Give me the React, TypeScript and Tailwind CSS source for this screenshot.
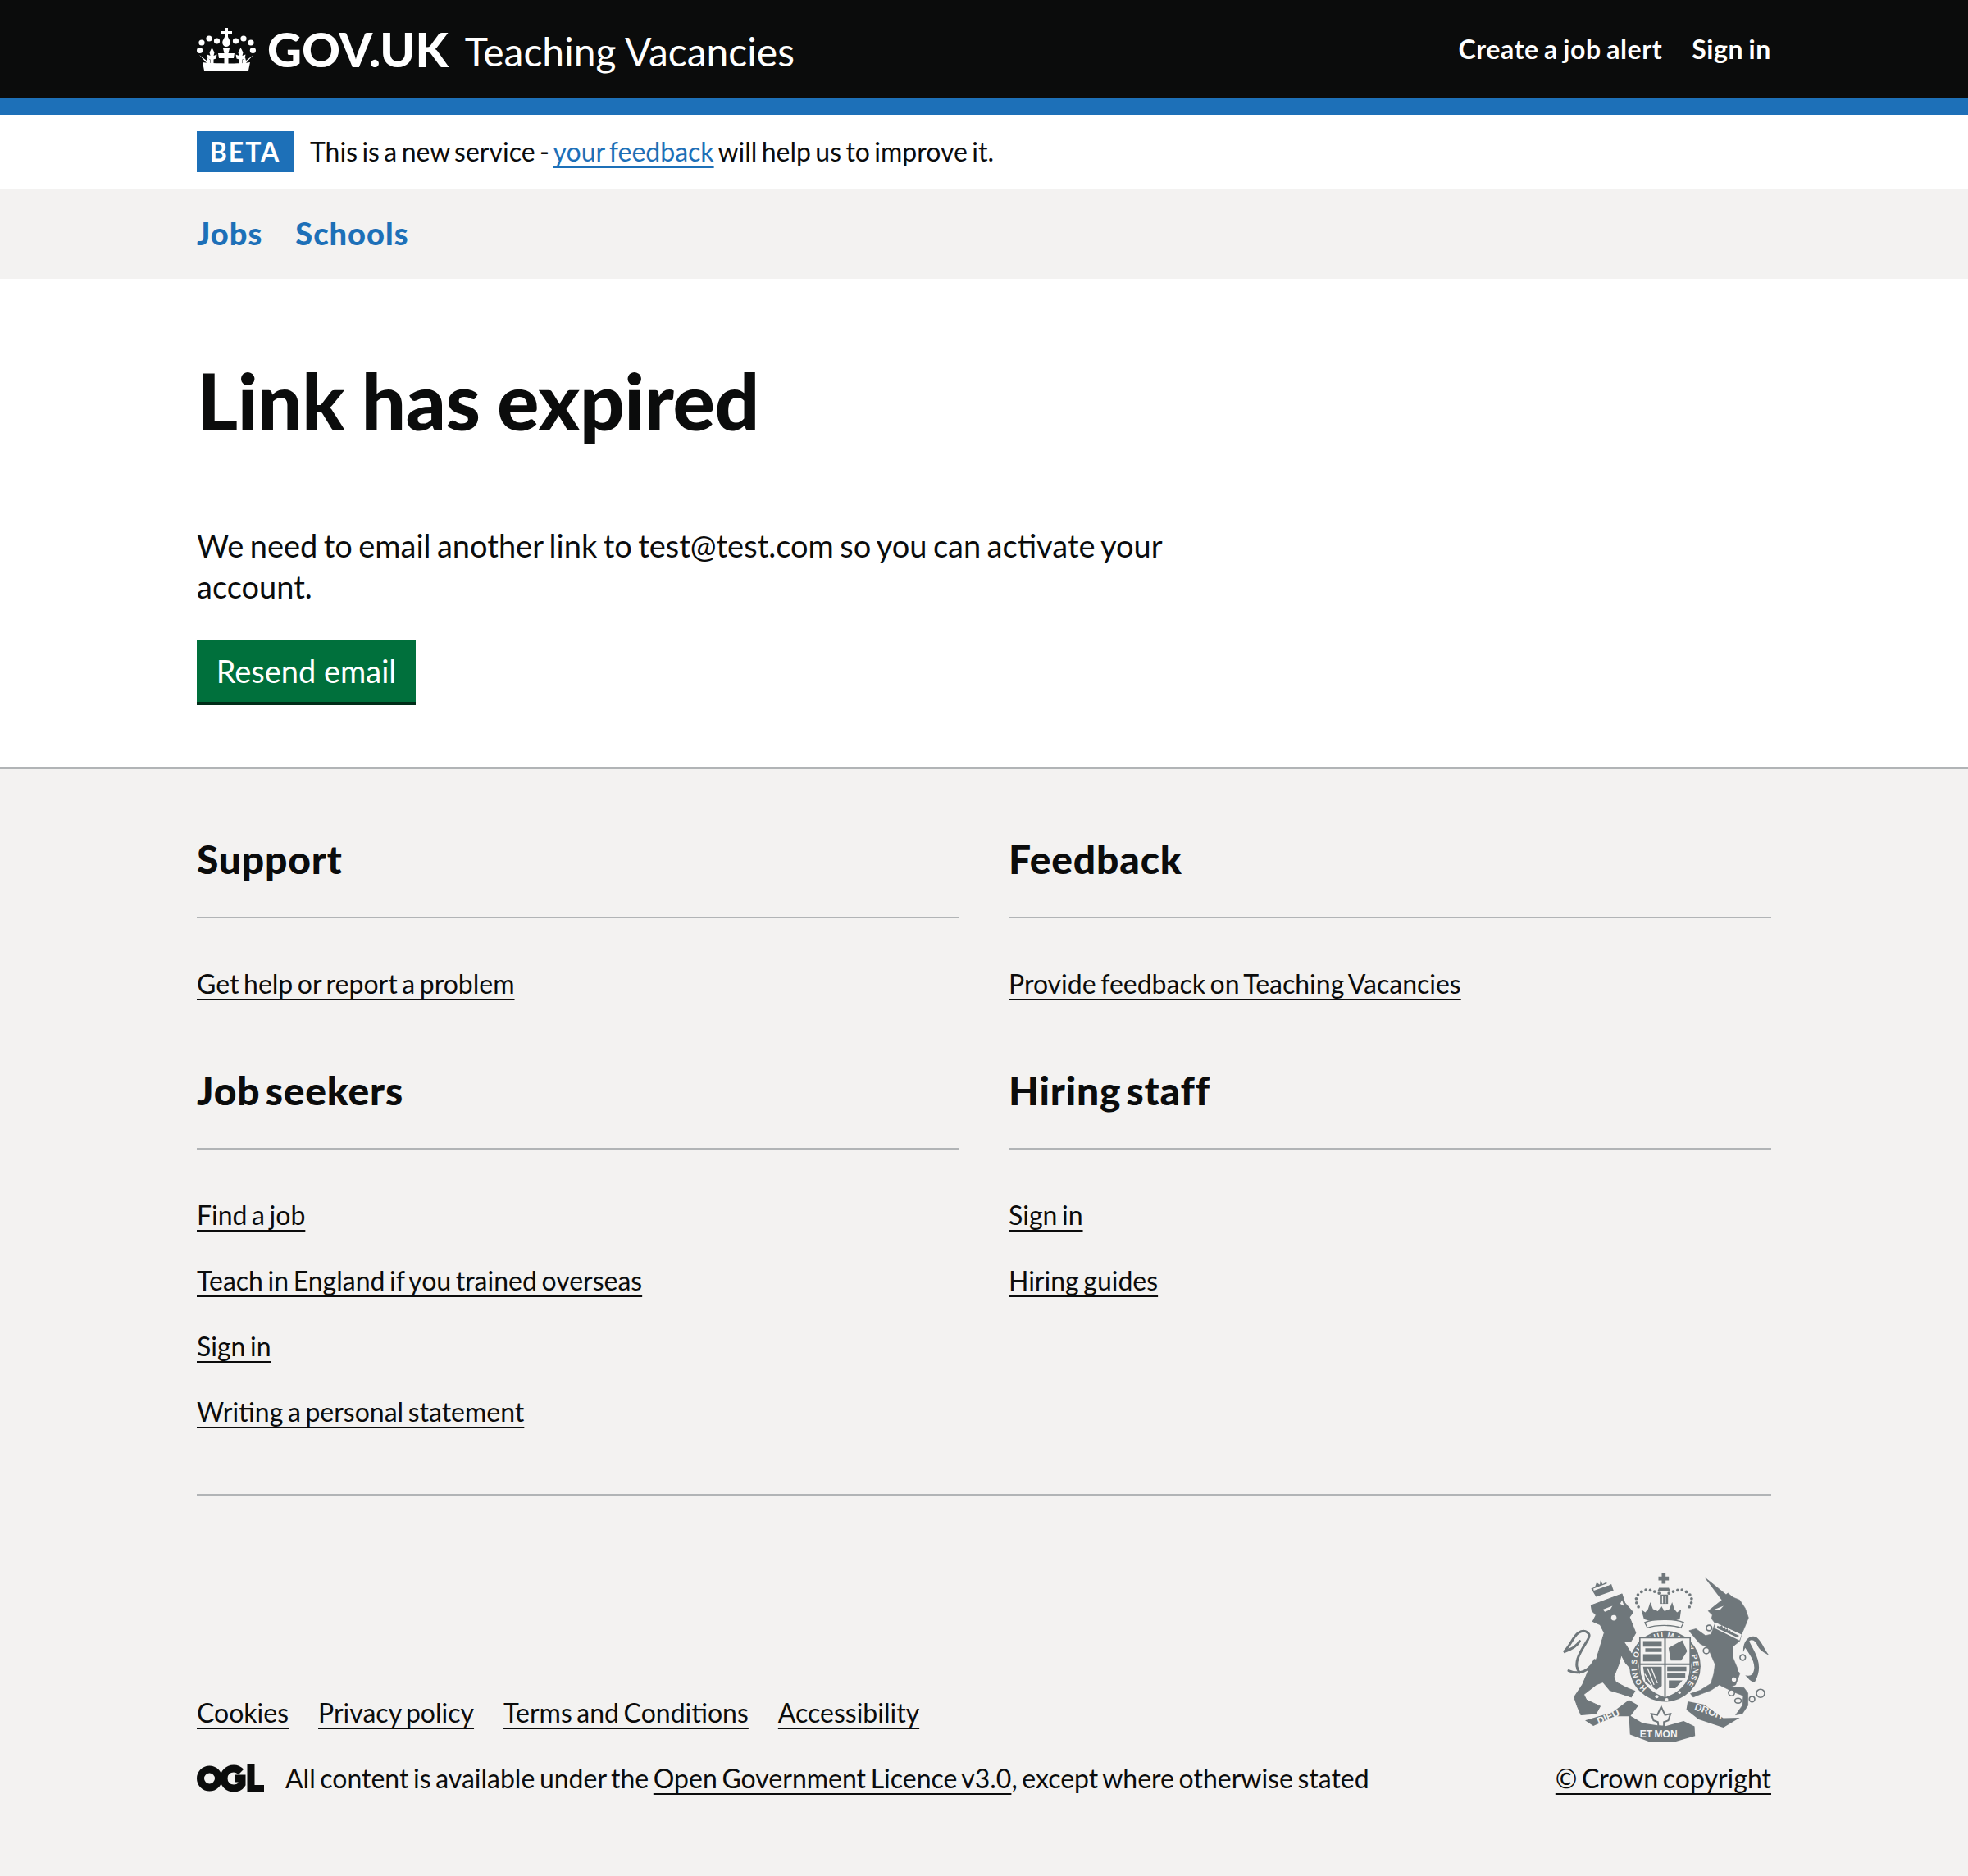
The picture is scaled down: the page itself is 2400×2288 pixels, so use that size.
import React from "react";

const CrownLogo = () => (
  <svg viewBox="0 0 72 52" className="h-[52px] w-[72px] shrink-0" fill="#fff">
    <path d="M34 0h4v4h5v4h-5v3l2.500 5c1 4-1.500 7-4.500 7s-5.500-3-4.500-7L34 11V8h-5V4h5z" />
    <circle cx="6" cy="18" r="3.600" />
    <circle cx="15" cy="13" r="3.600" />
    <circle cx="24.500" cy="16" r="3.600" />
    <circle cx="47.500" cy="16" r="3.600" />
    <circle cx="57" cy="13" r="3.600" />
    <circle cx="66" cy="18" r="3.600" />
    <circle cx="3.600" cy="27.500" r="3.600" />
    <circle cx="68.400" cy="27.500" r="3.600" />
    <path d="M3 33l9 7 1-4 3 3v5h-3zM69 33l-9 7-1-4-3 3v5h3z" />
    <path d="M18.500 24l3 6-1 4 4-1.500-1 5-3 1V44h-4v-5.500l-3-1-1-5 4 1.500-1-4z" />
    <path d="M53.500 24l3 6-1 4 4-1.500-1 5-3 1V44h-4v-5.500l-3-1-1-5 4 1.500-1-4z" />
    <path d="M32 25h8l-1.500 6H46l-1 6h-6.500v7h-5v-7H27l-1-6h7.500z" />
    <path d="M7 42c8 2 50 2 58 0l-2 10H9z" />
  </svg>
);

const OglLogo = () => (
  <svg viewBox="0 0 82 34" className="h-[34px] w-[82px] shrink-0" fill="none" stroke="#0b0c0c">
    <circle cx="15.500" cy="17" r="11" strokeWidth="9" />
    <path d="M54 9c-2-2-5-4-9-4-7 0-12 5-12 12s5 12 12 12c5 0 8-2 10-5v-7h-9" strokeWidth="9" />
    <path d="M66 0v29.500h16" strokeWidth="9" />
  </svg>
);

const COAT = "#6f777b";
const PAPER = "#f3f2f1";

const CoatOfArms = () => (
  <svg viewBox="60 70 770 620" className="h-[207px] w-[257px]" fill={COAT} fontFamily="'Liberation Sans', sans-serif" fontWeight="700">
    {/* lion */}
    <path
      strokeLinejoin="round"
      stroke={COAT}
      strokeWidth="3"
      d="M172 190L285 148L295 180L325 215L312 232L335 290L318 320L290 320L338 395L345 420L320 425L298 400L282 370L275 400L255 450L262 470L300 490L332 503L318 525L280 512L240 500L215 470L190 480L145 515L155 535L205 558L190 585L135 590L122 560L110 525L140 480L165 420L190 390L205 340L220 290L205 260L178 248L190 225L175 210Z"
    />
    <g fill="none" stroke={COAT} strokeWidth="9" strokeLinecap="round">
      <path d="M185 390C165 430 130 445 90 428" />
      <path d="M130 435C100 400 140 350 160 315C175 290 150 275 125 290C105 305 95 340 72 360C100 350 120 340 130 320" />
    </g>
    <path d="M172 128l14-6 6-16 12 8 2-16 8 14 14-8 4 14 14-6 8 24-64 22z" />
    <path d="M180 128l60-22 2 8-60 22z" fill={PAPER} />
    <circle cx="255" cy="235" r="10" fill={PAPER} />
    <path d="M215 205l35-14-8 14-20 8zM285 170l8 22-15-8z" fill={PAPER} />
    {/* unicorn */}
    <path
      strokeLinejoin="round"
      stroke={COAT}
      strokeWidth="2"
      d="M588 88L665 150L672 145L690 160L715 170L735 200L747 235L735 265L722 295L715 320L690 340L690 380L715 440L700 480L680 488L730 490L745 510L745 555L725 585L700 590L725 555L728 520L690 505L640 480L610 500L570 515L545 525L535 512L570 500L610 475L620 440L625 405L610 370L600 345L570 330L540 295L530 282L555 275L590 300L610 295L625 255L612 238L615 225L600 210L625 190L650 170Z"
    />
    <path d="M728 360C725 315 755 295 775 305C795 320 805 350 822 372C805 362 790 355 782 340C775 320 760 310 750 320C760 350 810 400 770 470C755 470 745 455 735 445C755 450 765 445 768 420C770 390 745 360 735 345Z" />
    <path d="M626 252l96 44-8 22-92-46z" fill={PAPER} />
    <path d="M634 264l78 36-3 8-78-36zM640 258l4 8 6-4 4 10 6-4 4 10 6-4 4 10 6-4 4 10 6-4 4 12-50-24z" />
    <path d="M622 205l34-14-14 16z" fill={PAPER} />
    <g fill={PAPER} stroke={COAT} strokeWidth="5">
      <circle cx="603" cy="272" r="10" />
      <circle cx="593" cy="355" r="11" />
      <circle cx="726" cy="380" r="10" />
      <circle cx="685" cy="509" r="11" />
      <ellipse cx="709" cy="538" rx="12" ry="9" />
      <circle cx="760" cy="532" r="10" />
      <circle cx="791" cy="511" r="15" />
    </g>
    <circle cx="716" cy="425" r="8" fill={PAPER} />
    <circle cx="694" cy="461" r="8" fill={PAPER} />
    {/* crown */}
    <path d="M430 72h14v12h12v14h-12v12h-14V98h-12V84h12z" />
    <path d="M420 125h36l6 14h-48z" />
    <g>
      <circle cx="338" cy="180" r="5.500" /><circle cx="337" cy="165" r="5.500" /><circle cx="343" cy="151" r="5.500" />
      <circle cx="356" cy="140" r="5.500" /><circle cx="372" cy="133" r="5.500" /><circle cx="388" cy="134" r="5.500" />
      <circle cx="404" cy="139" r="5.500" /><circle cx="420" cy="145" r="5.500" /><circle cx="456" cy="145" r="5.500" />
      <circle cx="472" cy="139" r="5.500" /><circle cx="488" cy="134" r="5.500" /><circle cx="504" cy="133" r="5.500" />
      <circle cx="520" cy="140" r="5.500" /><circle cx="533" cy="151" r="5.500" /><circle cx="539" cy="165" r="5.500" />
      <circle cx="538" cy="180" r="5.500" /><circle cx="345" cy="195" r="5.500" /><circle cx="531" cy="195" r="5.500" />
    </g>
    <path d="M423 150h30v34h-30z" />
    <path d="M431 154h4v28h-4zM441 154h4v28h-4z" fill={PAPER} />
    <path d="M355 205l15 10 10-12 8-25 10 25 18 8 12-20 12 20 18-8 10-25 8 25 10 12 15-10-5 34c-20 12-110 12-131 0z" />
    <path d="M368 252c30-14 110-14 142 0l-10 20c-30-12-92-12-122 0z" fill={PAPER} stroke={COAT} strokeWidth="4" />
    {/* garter */}
    <circle cx="442" cy="412" r="130" />
    <circle cx="442" cy="412" r="96" fill={PAPER} />
    <path id="garterRing" d="M376 492A104 104 0 1 1 508 492" fill="none" />
    <text fontSize="28" fill={PAPER}>
      <textPath href="#garterRing" textLength="490" lengthAdjust="spacing">
        HONI SOIT QUI MAL Y PENSE
      </textPath>
    </text>
    {/* shield */}
    <path d="M350 308h184v116c0 56-48 90-92 104-44-14-92-48-92-104z" fill={PAPER} stroke={COAT} strokeWidth="5" />
    <path d="M439 304h6v226h-6zM350 402h184v6H350z" />
    <path d="M362 320h68v20h-68zM370 346h60v14h-60zM362 368h68v26h-68zM455 345l50-28 18 40-22 34-38 0z" />
    <path d="M362 414h68v70l-20 14-40-30z" />
    <path d="M378 420l24 60M392 418l22 56M368 440l28 46" stroke={PAPER} strokeWidth="4" fill="none" />
    <path d="M450 414h70v16h-70zM450 438h66v18h-66zM456 464h50l-26 28h-24z" />
    <circle cx="412" cy="523" r="6" fill={PAPER} />
    <circle cx="448" cy="534" r="6" fill={PAPER} />
    <circle cx="495" cy="508" r="5" fill={PAPER} />
    {/* motto */}
    <path d="M150 610l100-30 60-45 35 20-30 40-55 0-80 35z" />
    <path d="M525 540l60 12 70 50 60-2-60 36-90-30-45-35z" />
    <path d="M310 590l50 30 80 12 70-20 40 20 2 35-70 20-100 0-68-25z" />
    <path d="M414 590l14-30 14 30 20-4-8 24-16 6 0 16-20 0-2-16-16-6-8-24z" fill="none" stroke={COAT} strokeWidth="6" />
    <text x="200" y="625" fontSize="36" fill={PAPER} transform="rotate(-24 200 625)">DIEU</text>
    <text x="350" y="672" fontSize="36" fill={PAPER}>ET MON</text>
    <text x="548" y="570" fontSize="36" fill={PAPER} transform="rotate(20 548 570)">DROIT</text>
  </svg>
);

const FooterLink = ({ children }: { children: React.ReactNode }) => (
  <a href="#" className="text-[32px] leading-[40px] text-[#0b0c0c] underline decoration-2 underline-offset-[6px]">
    {children}
  </a>
);

const FooterColumn = ({ title, links }: { title: string; links: string[] }) => (
  <div>
    <h2 className="text-[48px] font-black leading-[50px] tracking-[0.8px] text-[#0b0c0c] [word-spacing:-6px]">{title}</h2>
    <hr className="mt-[45px] border-t-2 border-[#b1b4b6]" />
    <ul className="mt-[60px] flex flex-col gap-[40px] [word-spacing:-2.6px]">
      {links.map((link) => (
        <li key={link} className="h-[40px]">
          <FooterLink>{link}</FooterLink>
        </li>
      ))}
    </ul>
  </div>
);

export default function App() {
  return (
    <div className="min-h-[2288px] bg-white font-['Lato',sans-serif] text-[#0b0c0c]">
      <header className="h-[140px] border-b-[20px] border-[#1d70b8] bg-[#0b0c0c]">
        <div className="mx-[240px] flex h-[120px] items-center justify-between">
          <div className="flex items-center">
            <CrownLogo />
            <span className="ml-[14px] text-[58px] font-black leading-none text-white">GOV.UK</span>
            <span className="ml-[20px] mt-[6px] text-[48px] leading-none text-white">Teaching Vacancies</span>
          </div>
          <nav className="flex gap-[36px] text-[32px] font-bold tracking-[0.6px] text-white [word-spacing:-2px]">
            <a href="#">Create a job alert</a>
            <a href="#">Sign in</a>
          </nav>
        </div>
      </header>

      <div className="mx-[240px] flex h-[90px] items-center">
        <strong className="flex h-[50px] w-[118px] items-center justify-center bg-[#1d70b8] text-[32px] font-bold tracking-[2px] text-white">
          BETA
        </strong>
        <p className="ml-[20px] text-[32px] [word-spacing:-2.8px]">
          This is a new service -{" "}
          <a href="#" className="text-[#1d70b8] underline decoration-2 underline-offset-[6px]">
            your feedback
          </a>{" "}
          will help us to improve it.
        </p>
      </div>

      <nav className="flex h-[110px] items-center gap-[40px] bg-[#f3f2f1] px-[240px] pb-[2px] text-[38px] font-black tracking-[1px] text-[#1d70b8]">
        <a href="#">Jobs</a>
        <a href="#">Schools</a>
      </nav>

      <main className="mx-[240px] h-[596px] pt-[88px]">
        <h1 className="text-[96px] font-black leading-[120px] tracking-[-0.4px] [word-spacing:-2px]">Link has expired</h1>
        <p className="mt-[92px] w-[1260px] text-[38px] leading-[50px] [word-spacing:-2.3px]">
          We need to email another link to test@test.com so you can activate your account.
        </p>
        <button className="mt-[40px] h-[80px] w-[267px] border-b-[4px] border-[#002d18] bg-[#00703c] text-[38px] text-white">
          Resend email
        </button>
      </main>

      <footer className="border-t-2 border-[#b1b4b6] bg-[#f3f2f1] px-[240px] pt-[85px]">
        <div className="grid grid-cols-2 gap-x-[60px] gap-y-[85px]">
          <FooterColumn title="Support" links={["Get help or report a problem"]} />
          <FooterColumn title="Feedback" links={["Provide feedback on Teaching Vacancies"]} />
          <FooterColumn
            title="Job seekers"
            links={["Find a job", "Teach in England if you trained overseas", "Sign in", "Writing a personal statement"]}
          />
          <FooterColumn title="Hiring staff" links={["Sign in", "Hiring guides"]} />
        </div>
        <hr className="mt-[80px] border-t-2 border-[#b1b4b6]" />
        <div className="mt-[94px] flex items-end justify-between pb-[100px] [word-spacing:-2.6px]">
          <div>
            <div className="flex gap-[36px]">
              <FooterLink>Cookies</FooterLink>
              <FooterLink>Privacy policy</FooterLink>
              <FooterLink>Terms and Conditions</FooterLink>
              <FooterLink>Accessibility</FooterLink>
            </div>
            <div className="mt-[40px] flex items-center">
              <OglLogo />
              <p className="ml-[26px] text-[32px] leading-[40px]">
                All content is available under the <FooterLink>Open Government Licence v3.0</FooterLink>, except where
                otherwise stated
              </p>
            </div>
          </div>
          <div className="flex flex-col items-end">
            <CoatOfArms />
            <div className="mt-[24px]">
              <FooterLink>© Crown copyright</FooterLink>
            </div>
          </div>
        </div>
      </footer>
    </div>
  );
}
